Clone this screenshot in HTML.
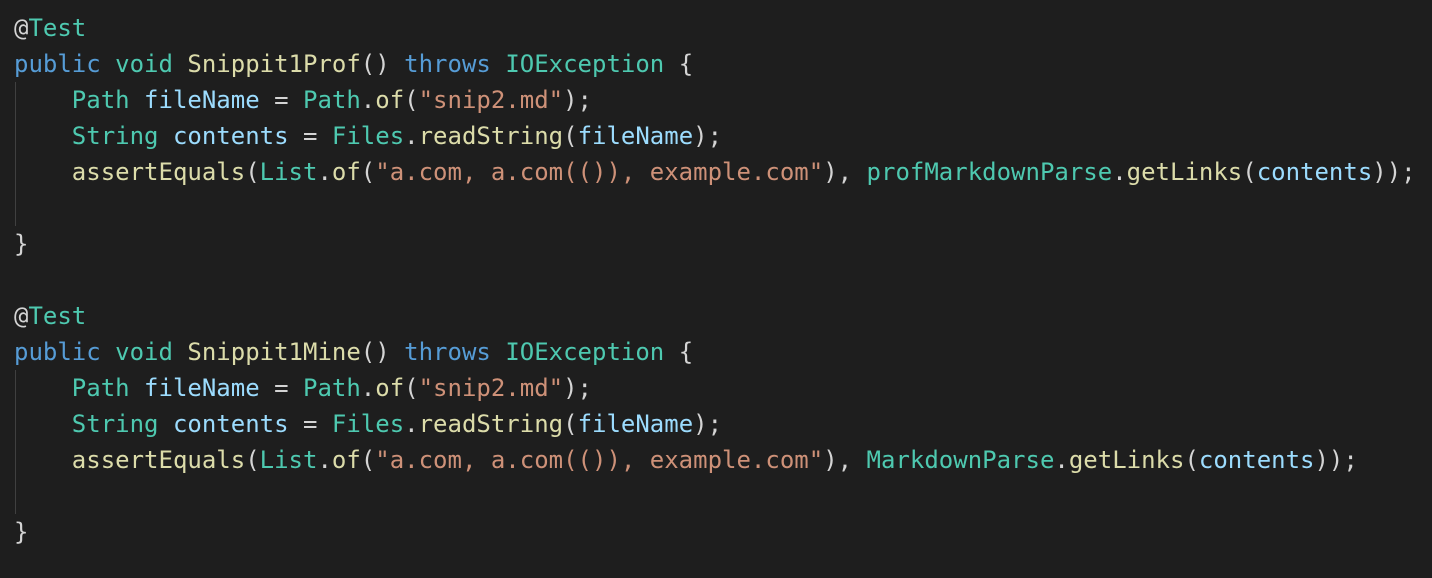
<!DOCTYPE html>
<html><head><meta charset="utf-8"><style>
html,body{margin:0;padding:0;background:#1e1e1e;width:1432px;height:578px;overflow:hidden}
pre{margin:0;position:absolute;left:14px;top:10px;font-family:"DejaVu Sans Mono","Liberation Mono",monospace;font-size:24px;line-height:36px;color:#d4d4d4}
.k{color:#569cd6}.t{color:#4ec9b0}.f{color:#dcdcaa}.s{color:#ce9178}.v{color:#9cdcfe}.p{color:#d4d4d4}
.g{position:absolute;left:15px;width:1px;background:#404040}
</style></head><body>
<div class="g" style="top:82px;height:144px"></div>
<div class="g" style="top:370px;height:144px"></div>
<pre><span class="p">@</span><span class="t">Test</span>
<span class="k">public</span> <span class="t">void</span> <span class="f">Snippit1Prof</span>() <span class="k">throws</span> <span class="t">IOException</span> {
    <span class="t">Path</span> <span class="v">fileName</span> = <span class="t">Path</span>.<span class="f">of</span>(<span class="s">"snip2.md"</span>);
    <span class="t">String</span> <span class="v">contents</span> = <span class="t">Files</span>.<span class="f">readString</span>(<span class="v">fileName</span>);
    <span class="f">assertEquals</span>(<span class="t">List</span>.<span class="f">of</span>(<span class="s">"a.com, a.com(()), example.com"</span>), <span class="t">profMarkdownParse</span>.<span class="f">getLinks</span>(<span class="v">contents</span>));

}

<span class="p">@</span><span class="t">Test</span>
<span class="k">public</span> <span class="t">void</span> <span class="f">Snippit1Mine</span>() <span class="k">throws</span> <span class="t">IOException</span> {
    <span class="t">Path</span> <span class="v">fileName</span> = <span class="t">Path</span>.<span class="f">of</span>(<span class="s">"snip2.md"</span>);
    <span class="t">String</span> <span class="v">contents</span> = <span class="t">Files</span>.<span class="f">readString</span>(<span class="v">fileName</span>);
    <span class="f">assertEquals</span>(<span class="t">List</span>.<span class="f">of</span>(<span class="s">"a.com, a.com(()), example.com"</span>), <span class="t">MarkdownParse</span>.<span class="f">getLinks</span>(<span class="v">contents</span>));

}</pre>
</body></html>
